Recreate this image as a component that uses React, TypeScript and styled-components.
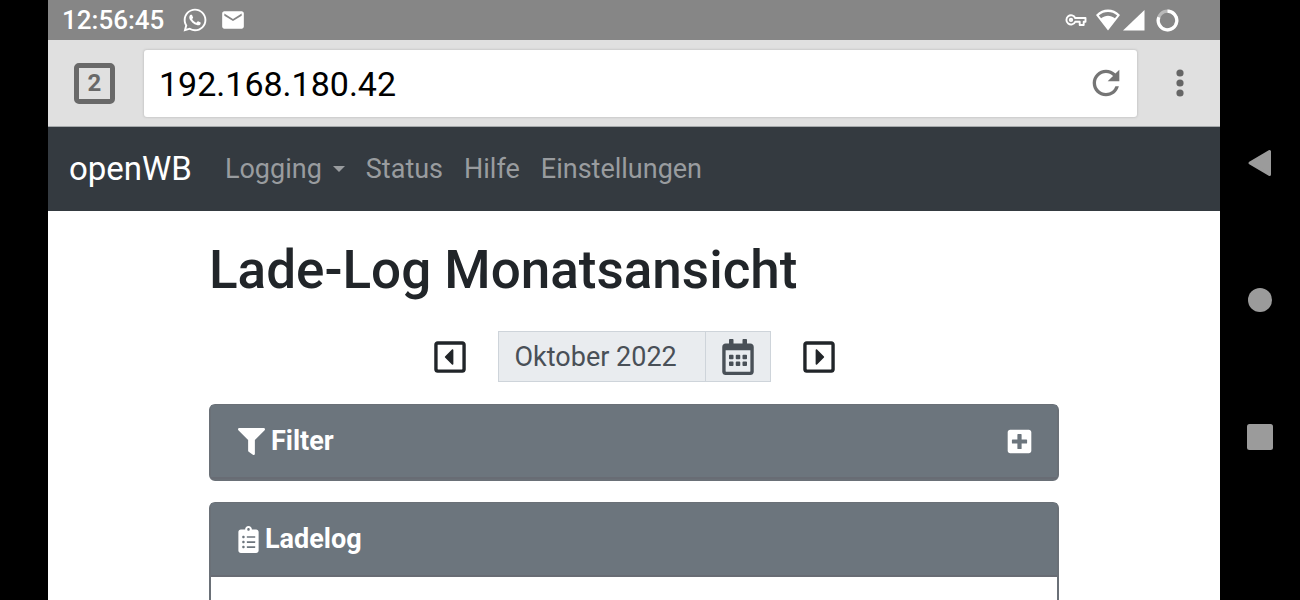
import React from "react";
import styled, { createGlobalStyle } from "styled-components";
import {
  FaClipboardList,
  FaFilter,
  FaPlusSquare,
  FaRegCalendarAlt,
  FaRegCaretSquareLeft,
  FaRegCaretSquareRight,
  FaWhatsapp,
} from "react-icons/fa";
import { MdEmail, MdRefresh } from "react-icons/md";

const GlobalStyle = createGlobalStyle`
  *, *::before, *::after { box-sizing: border-box; }
  body {
    margin: 0;
    background: #000;
    color: #212529;
    font-family: Roboto, "Liberation Sans", sans-serif;
  }
  button, input { font: inherit; color: inherit; }
`;

const Device = styled.div`
  display: grid;
  grid-template-columns: 48px minmax(0, 1fr) 80px;
  min-height: 100vh;
  background: #000;
`;

const Screen = styled.div`
  grid-column: 2;
  display: flex;
  flex-direction: column;
  background: #fff;
`;

const StatusBar = styled.div`
  display: flex;
  align-items: center;
  justify-content: space-between;
  height: 40px;
  padding: 0 41px 0 14px;
  background: #868686;
  color: #fff;
`;

const StatusGroup = styled.div<{ $gap: number }>`
  display: flex;
  align-items: center;
  gap: ${(p) => p.$gap}px;
  svg { display: block; }
`;

const Clock = styled.time`
  margin-right: 6px;
  font-size: 26px;
  font-weight: 500;
  line-height: 40px;
`;

const Toolbar = styled.div`
  display: flex;
  align-items: center;
  gap: 29px;
  height: 87px;
  padding: 0 26px;
  background: #e0e0e0;
  border-bottom: 1px solid #a5a9ab;
`;

const TabsButton = styled.button`
  width: 41px;
  height: 41px;
  padding: 0;
  background: transparent;
  border: 5px solid #696969;
  border-radius: 5px;
  color: #696969;
  font-size: 24px;
  font-weight: 700;
  line-height: 30px;
`;

const AddressBar = styled.form`
  flex: 1;
  display: flex;
  align-items: center;
  height: 67px;
  padding: 0 11px 0 15px;
  background: #fff;
  border-radius: 3px;
  box-shadow: 0 0 2px 1px #cbcbcb;
`;

const AddressInput = styled.input`
  flex: 1;
  min-width: 0;
  padding: 2px 0 0;
  border: 0;
  outline: 0;
  background: transparent;
  color: #000;
  font-size: 34px;
  line-height: 48px;
`;

const IconButton = styled.button`
  display: flex;
  align-items: center;
  justify-content: center;
  padding: 0;
  border: 0;
  background: transparent;
  svg { display: block; }
`;

const ReloadButton = styled(IconButton)`
  color: #757575;
`;

const MenuButton = styled(IconButton)`
  width: 28px;
  height: 48px;
  color: #666;
`;

const Navbar = styled.nav`
  display: flex;
  align-items: center;
  gap: 21px;
  height: 84px;
  padding: 0 21px;
  background: #343a40;
`;

const Brand = styled.a`
  margin-right: 12px;
  color: #fff;
  font-size: 33px;
  line-height: 48px;
  text-decoration: none;
`;

const NavLink = styled.a`
  display: flex;
  align-items: center;
  color: #999c9f;
  font-size: 27px;
  line-height: 40px;
  text-decoration: none;
`;

const Caret = styled.span`
  margin-left: 11px;
  border: 6px solid transparent;
  border-top-color: currentColor;
  border-bottom: 0;
`;

const Container = styled.main`
  flex: 1;
  display: flex;
  flex-direction: column;
  width: 100%;
  max-width: 850px;
  margin: 0 auto;
  padding-top: 27px;
`;

const Title = styled.h1`
  margin: 0 0 29px;
  font-size: 53px;
  font-weight: 500;
  line-height: 64px;
`;

const MonthRow = styled.div`
  display: flex;
  align-items: center;
  justify-content: center;
  gap: 30px;
  margin-bottom: 22px;
`;

const MonthGroup = styled.div`
  display: flex;
  width: 273px;
  height: 51px;
  background: #e9ecef;
  border: 1px solid #ced4da;
  color: #495057;
`;

const MonthInput = styled.input`
  flex: 1;
  min-width: 0;
  padding: 0 16px;
  border: 0;
  border-right: 1px solid #ced4da;
  outline: 0;
  background: transparent;
  font-size: 27px;
  line-height: 40px;
`;

const CalendarButton = styled(IconButton)`
  width: 64px;
`;

const Card = styled.section<{ $fill?: boolean }>`
  display: flex;
  flex-direction: column;
  flex: ${(p) => (p.$fill ? "1" : "none")};
  margin-bottom: ${(p) => (p.$fill ? 0 : 21)}px;
  border: 2px solid #6a7077;
  border-top-width: 1px;
  border-bottom-width: ${(p) => (p.$fill ? 0 : 2)}px;
  border-radius: ${(p) => (p.$fill ? "6px 6px 0 0" : "6px")};
`;

const CardHeader = styled.header`
  display: flex;
  align-items: center;
  justify-content: space-between;
  height: 74px;
  padding: 0 24px 0 27px;
  background: #6c757d;
  border-bottom: 2px solid #686c74;
  color: #fff;
`;

const CardTitle = styled.h2`
  display: flex;
  align-items: center;
  gap: 6px;
  margin: 0;
  font-size: 27px;
  font-weight: 700;
  line-height: 40px;
`;

const ListIcon = styled(FaClipboardList)`
  width: 21px;
  height: 27px;
`;

const SystemNav = styled.nav`
  display: flex;
  flex-direction: column;
  align-items: center;
  gap: 97px;
  height: 100vh;
  padding-top: 143px;
  color: #9b9b9b;
`;

const SystemButton = styled(IconButton)`
  width: 40px;
  height: 40px;
`;

function KeyIcon() {
  return (
    <svg width="22" height="14" viewBox="0 0 22 14" fill="none" stroke="currentColor" strokeWidth="1.9" strokeLinejoin="round" aria-hidden="true">
      <path d="M10.200 5H20.500V8.800H18.700V12H14.700V8.800H10.200A4.600 4.600 0 1 1 10.200 5z" />
      <circle cx="6" cy="6.9" r="1.2" />
    </svg>
  );
}

function WifiIcon() {
  return (
    <svg width="26" height="22" viewBox="0 0 26 22" fill="currentColor" aria-hidden="true">
      <path fillRule="evenodd" d="M1 6C8 -1.300 18 -1.300 25 6L13 21.500zM3.800 6.400l2.300 2.900c4.300-3.400 9.500-3.400 13.800 0L22.200 6.400c-5.500-4.500-12.900-4.500-18.400 0z" />
    </svg>
  );
}

function SignalIcon() {
  return (
    <svg width="22" height="21" viewBox="0 0 22 21" fill="currentColor" aria-hidden="true">
      <path d="M21.500 0v20.500H0z" />
    </svg>
  );
}

const Ring = styled.svg`
  margin-left: 3px;
`;

function BatteryRing() {
  return (
    <Ring width="23" height="23" viewBox="0 0 23 23" fill="none" strokeWidth="3.2" aria-hidden="true">
      <circle cx="11.5" cy="11.5" r="9.3" stroke="#b9b9b9" />
      <path d="M11.500 2.200a9.300 9.300 0 1 1-8.700 6" stroke="currentColor" />
    </Ring>
  );
}

export default function App() {
  return (
    <>
      <GlobalStyle />
      <Device>
        <Screen>
          <StatusBar>
            <StatusGroup $gap={12}>
              <Clock>12:56:45</Clock>
              <FaWhatsapp size={26} />
              <MdEmail size={26} />
            </StatusGroup>
            <StatusGroup $gap={8}>
              <KeyIcon />
              <StatusGroup $gap={2}>
                <WifiIcon />
                <SignalIcon />
              </StatusGroup>
              <BatteryRing />
            </StatusGroup>
          </StatusBar>
          <Toolbar>
            <TabsButton type="button" aria-label="Tabs">2</TabsButton>
            <AddressBar>
              <AddressInput aria-label="URL" defaultValue="192.168.180.42" />
              <ReloadButton type="button" aria-label="Reload">
                <MdRefresh size={40} />
              </ReloadButton>
            </AddressBar>
            <MenuButton type="button" aria-label="Menu">
              <svg width="8" height="28" viewBox="0 0 8 28" fill="currentColor" aria-hidden="true">
                <circle cx="4" cy="4" r="3.6" />
                <circle cx="4" cy="14" r="3.6" />
                <circle cx="4" cy="24" r="3.6" />
              </svg>
            </MenuButton>
          </Toolbar>
          <Navbar>
            <Brand href="#">openWB</Brand>
            <NavLink href="#">Logging<Caret /></NavLink>
            <NavLink href="#">Status</NavLink>
            <NavLink href="#">Hilfe</NavLink>
            <NavLink href="#">Einstellungen</NavLink>
          </Navbar>
          <Container>
            <Title>Lade-Log Monatsansicht</Title>
            <MonthRow>
              <IconButton type="button" aria-label="Vorheriger Monat">
                <FaRegCaretSquareLeft size={36} />
              </IconButton>
              <MonthGroup>
                <MonthInput aria-label="Monat" readOnly value="Oktober 2022" />
                <CalendarButton type="button" aria-label="Kalender">
                  <FaRegCalendarAlt size={36} />
                </CalendarButton>
              </MonthGroup>
              <IconButton type="button" aria-label="Nächster Monat">
                <FaRegCaretSquareRight size={36} />
              </IconButton>
            </MonthRow>
            <Card>
              <CardHeader>
                <CardTitle><FaFilter size={27} />Filter</CardTitle>
                <IconButton type="button" aria-label="Filter anzeigen">
                  <FaPlusSquare size={27} />
                </IconButton>
              </CardHeader>
            </Card>
            <Card $fill>
              <CardHeader>
                <CardTitle><ListIcon />Ladelog</CardTitle>
              </CardHeader>
            </Card>
          </Container>
        </Screen>
        <SystemNav aria-label="System">
          <SystemButton type="button" aria-label="Zurück">
            <svg width="26" height="28" viewBox="0 0 26 28" fill="currentColor" stroke="currentColor" strokeWidth="3" strokeLinejoin="round" aria-hidden="true">
              <path d="M3 14l19.500-11.500v23z" />
            </svg>
          </SystemButton>
          <SystemButton type="button" aria-label="Startseite">
            <svg width="24" height="24" viewBox="0 0 24 24" fill="currentColor" aria-hidden="true">
              <circle cx="12" cy="12" r="12" />
            </svg>
          </SystemButton>
          <SystemButton type="button" aria-label="Übersicht">
            <svg width="26" height="26" viewBox="0 0 26 26" fill="currentColor" aria-hidden="true">
              <rect width="26" height="26" rx="2.5" />
            </svg>
          </SystemButton>
        </SystemNav>
      </Device>
    </>
  );
}
